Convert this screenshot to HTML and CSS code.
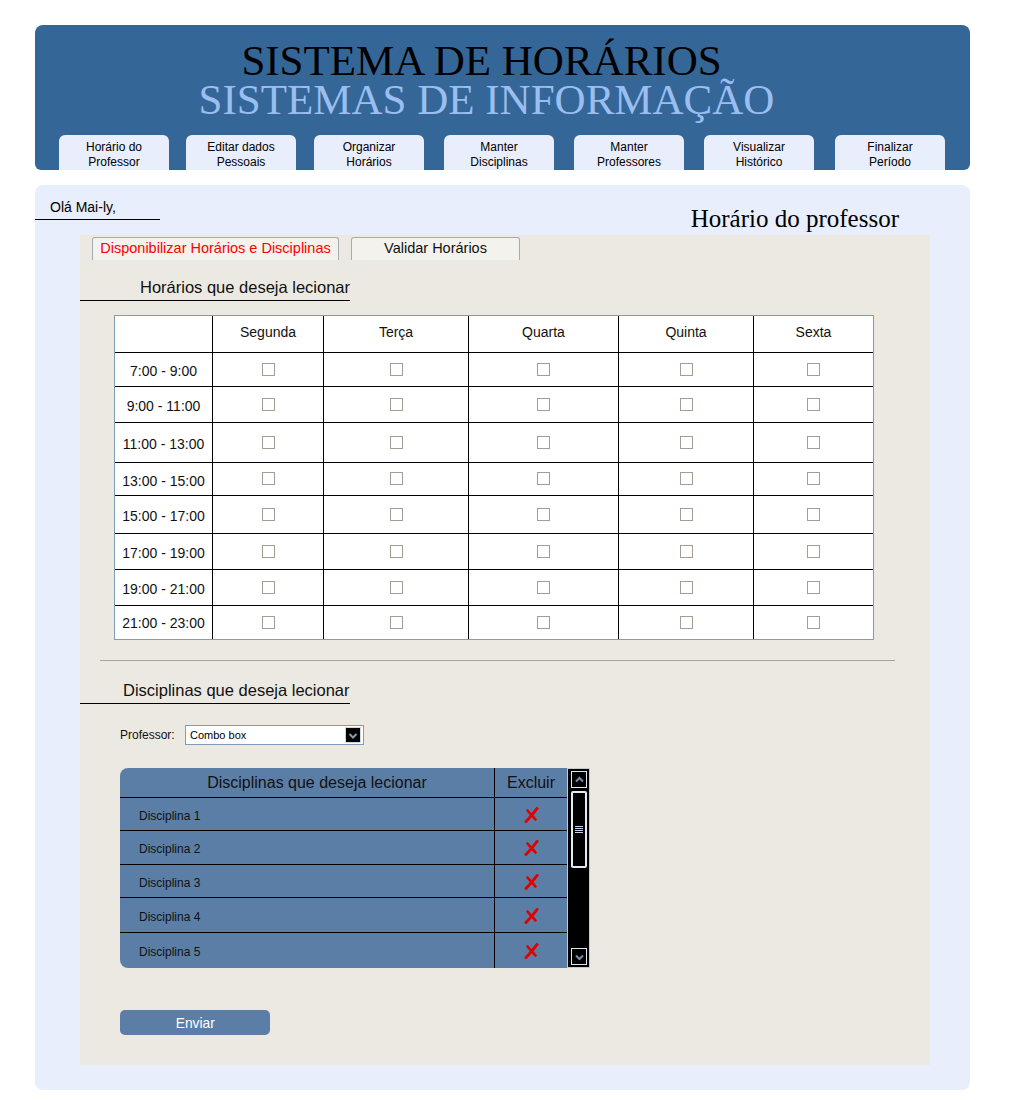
FILE: index.html
```html
<!DOCTYPE html>
<html lang="pt">
<head>
<meta charset="utf-8">
<title>Sistema de Horários</title>
<link rel="stylesheet" href="styles.css">
</head>
<body>
<div class="page">
  <header class="hdr">
    <div class="titles">
      <div class="t1">SISTEMA DE HORÁRIOS</div>
      <div class="t2">SISTEMAS DE INFORMAÇÃO</div>
    </div>
    <nav class="nav">
      <div class="nav-tab">Horário do<br>Professor</div>
      <div class="nav-tab">Editar dados<br>Pessoais</div>
      <div class="nav-tab">Organizar<br>Horários</div>
      <div class="nav-tab">Manter<br>Disciplinas</div>
      <div class="nav-tab">Manter<br>Professores</div>
      <div class="nav-tab">Visualizar<br>Histórico</div>
      <div class="nav-tab">Finalizar<br>Período</div>
    </nav>
  </header>

  <main class="main">
    <div class="top-row">
      <div class="greet">Olá Mai-ly,</div>
      <h1 class="page-title">Horário do professor</h1>
    </div>

    <section class="panel">
      <div class="tabs">
        <div class="tab active">Disponibilizar Horários e Disciplinas</div>
        <div class="tab">Validar Horários</div>
      </div>

      <h2 class="sec-h sec-h1">Horários que deseja lecionar</h2>

      <div class="grid">
        <div class="c h"></div><div class="c h">Segunda</div><div class="c h">Terça</div><div class="c h">Quarta</div><div class="c h">Quinta</div><div class="c h">Sexta</div>
        <div class="c t">7:00 - 9:00</div><div class="c"><span class="cb"></span></div><div class="c"><span class="cb"></span></div><div class="c"><span class="cb"></span></div><div class="c"><span class="cb"></span></div><div class="c"><span class="cb"></span></div>
        <div class="c t">9:00 - 11:00</div><div class="c"><span class="cb"></span></div><div class="c"><span class="cb"></span></div><div class="c"><span class="cb"></span></div><div class="c"><span class="cb"></span></div><div class="c"><span class="cb"></span></div>
        <div class="c t">11:00 - 13:00</div><div class="c"><span class="cb"></span></div><div class="c"><span class="cb"></span></div><div class="c"><span class="cb"></span></div><div class="c"><span class="cb"></span></div><div class="c"><span class="cb"></span></div>
        <div class="c t">13:00 - 15:00</div><div class="c"><span class="cb"></span></div><div class="c"><span class="cb"></span></div><div class="c"><span class="cb"></span></div><div class="c"><span class="cb"></span></div><div class="c"><span class="cb"></span></div>
        <div class="c t">15:00 - 17:00</div><div class="c"><span class="cb"></span></div><div class="c"><span class="cb"></span></div><div class="c"><span class="cb"></span></div><div class="c"><span class="cb"></span></div><div class="c"><span class="cb"></span></div>
        <div class="c t">17:00 - 19:00</div><div class="c"><span class="cb"></span></div><div class="c"><span class="cb"></span></div><div class="c"><span class="cb"></span></div><div class="c"><span class="cb"></span></div><div class="c"><span class="cb"></span></div>
        <div class="c t">19:00 - 21:00</div><div class="c"><span class="cb"></span></div><div class="c"><span class="cb"></span></div><div class="c"><span class="cb"></span></div><div class="c"><span class="cb"></span></div><div class="c"><span class="cb"></span></div>
        <div class="c t last">21:00 - 23:00</div><div class="c"><span class="cb"></span></div><div class="c"><span class="cb"></span></div><div class="c"><span class="cb"></span></div><div class="c"><span class="cb"></span></div><div class="c"><span class="cb"></span></div>
      </div>

      <div class="sep"></div>

      <h2 class="sec-h sec-h2">Disciplinas que deseja lecionar</h2>

      <div class="prof-row">
        <span class="prof-label">Professor:</span>
        <div class="combo">
          <span class="combo-text">Combo box</span>
          <span class="combo-btn">
            <svg width="14" height="13" viewBox="0 0 14 13"><polyline points="3.5,5 7,8.5 10.5,5" fill="none" stroke="#8a98b4" stroke-width="2"/></svg>
          </span>
        </div>
      </div>

      <div class="disc">
        <div class="disc-grid">
          <div class="d dh">Disciplinas que deseja lecionar</div><div class="d dh dx">Excluir</div>
          <div class="d dn">Disciplina 1</div><div class="d dx"><svg class="x" width="15" height="16" viewBox="0 0 15 16"><path d="M13 1.5 C10.5 5 6.5 10 2 14.5" fill="none" stroke="#e00000" stroke-width="3" stroke-linecap="round"/><path d="M3.5 3.5 C6 6.5 9 9.5 11.5 12.5" fill="none" stroke="#e00000" stroke-width="2.6" stroke-linecap="round"/></svg></div>
          <div class="d dn">Disciplina 2</div><div class="d dx"><svg class="x" width="15" height="16" viewBox="0 0 15 16"><path d="M13 1.5 C10.5 5 6.5 10 2 14.5" fill="none" stroke="#e00000" stroke-width="3" stroke-linecap="round"/><path d="M3.5 3.5 C6 6.5 9 9.5 11.5 12.5" fill="none" stroke="#e00000" stroke-width="2.6" stroke-linecap="round"/></svg></div>
          <div class="d dn">Disciplina 3</div><div class="d dx"><svg class="x" width="15" height="16" viewBox="0 0 15 16"><path d="M13 1.5 C10.5 5 6.5 10 2 14.5" fill="none" stroke="#e00000" stroke-width="3" stroke-linecap="round"/><path d="M3.5 3.5 C6 6.5 9 9.5 11.5 12.5" fill="none" stroke="#e00000" stroke-width="2.6" stroke-linecap="round"/></svg></div>
          <div class="d dn">Disciplina 4</div><div class="d dx"><svg class="x" width="15" height="16" viewBox="0 0 15 16"><path d="M13 1.5 C10.5 5 6.5 10 2 14.5" fill="none" stroke="#e00000" stroke-width="3" stroke-linecap="round"/><path d="M3.5 3.5 C6 6.5 9 9.5 11.5 12.5" fill="none" stroke="#e00000" stroke-width="2.6" stroke-linecap="round"/></svg></div>
          <div class="d dn">Disciplina 5</div><div class="d dx"><svg class="x" width="15" height="16" viewBox="0 0 15 16"><path d="M13 1.5 C10.5 5 6.5 10 2 14.5" fill="none" stroke="#e00000" stroke-width="3" stroke-linecap="round"/><path d="M3.5 3.5 C6 6.5 9 9.5 11.5 12.5" fill="none" stroke="#e00000" stroke-width="2.6" stroke-linecap="round"/></svg></div>
        </div>
        <div class="sbar">
          <div class="sb-btn">
            <svg width="13" height="14" viewBox="0 0 13 14"><polyline points="3,8.5 6.5,5 10,8.5" fill="none" stroke="#7d8ca8" stroke-width="2"/></svg>
          </div>
          <div class="sb-thumb">
            <span class="grip"></span><span class="grip"></span><span class="grip"></span><span class="grip"></span>
          </div>
          <div class="sb-track"></div>
          <div class="sb-btn">
            <svg width="13" height="14" viewBox="0 0 13 14"><polyline points="3,5.5 6.5,9 10,5.5" fill="none" stroke="#7d8ca8" stroke-width="2"/></svg>
          </div>
        </div>
      </div>

      <button class="send"><span class="send-text">Enviar</span></button>
    </section>
  </main>
</div>
</body>
</html>
```

FILE: styles.css
```css
* { box-sizing: border-box; }

body {
  margin: 0;
  background: #ffffff;
  font-family: "Liberation Sans", Arial, sans-serif;
  color: #000;
}

.page {
  width: 1024px;
  padding: 25px 0 10px 35px;
}

/* ---------- header ---------- */
.hdr {
  width: 935px;
  height: 145px;
  background: #346798;
  border-radius: 8px 8px 6px 6px;
  padding-top: 16px;
  overflow: hidden;
  display: flex;
  flex-direction: column;
}

.titles {
  font-family: "Liberation Serif", "Times New Roman", serif;
  font-size: 43px;
  line-height: 39px;
  text-align: center;
  padding-right: 36px;
}

.t1 { color: #000; padding-right: 6px; }
.t2 { color: #9bbef0; padding-left: 4px; }

.nav {
  display: flex;
  gap: 18px;
  padding: 0 25px 0 24px;
  margin-top: 16px;
}

.nav-tab {
  width: 110px;
  height: 35px;
  background: #e8eefb;
  border-radius: 6px 6px 0 0;
  font-size: 12px;
  line-height: 15px;
  text-align: center;
  padding-top: 5px;
  color: #000;
}

.nav-tab:nth-child(2) { margin-left: -1px; }
.nav-tab:nth-child(4),
.nav-tab:nth-child(5),
.nav-tab:nth-child(6) { margin-left: 2px; }
.nav-tab:nth-child(7) { margin-left: 3px; }

/* ---------- main ---------- */
.main {
  width: 935px;
  height: 905px;
  margin-top: 15px;
  background: #e8eefc;
  border-radius: 8px;
}

.top-row {
  display: flex;
  justify-content: space-between;
  height: 50px;
}

.greet {
  width: 125px;
  height: 35px;
  padding: 14px 0 0 15px;
  font-size: 14px;
  line-height: 17px;
  border-bottom: 1px solid #000;
}

.page-title {
  margin: 19px 71px 0 0;
  font-family: "Liberation Serif", "Times New Roman", serif;
  font-size: 25px;
  line-height: 30px;
  font-weight: normal;
}

.panel {
  margin: 0 40px 0 45px;
  height: 830px;
  background: #ece9e2;
  padding-top: 2px;
}

.tabs {
  display: flex;
  gap: 12px;
  padding-left: 12px;
}

.tab {
  width: 169px;
  height: 23px;
  background: #f4f2ec;
  border: 1px solid #a3abb3;
  border-bottom: none;
  border-radius: 3px 3px 0 0;
  font-size: 14.5px;
  line-height: 21px;
  text-align: center;
  color: #111;
  white-space: nowrap;
}

.tab.active {
  width: 247px;
  color: #ff0000;
}

.sec-h {
  width: 270px;
  margin: 16px 0 0 0;
  padding-top: 2px;
  font-size: 16.5px;
  line-height: 19px;
  font-weight: normal;
  color: #111;
  border-bottom: 1px solid #000;
  white-space: nowrap;
}

.sec-h1 { height: 25px; padding-left: 60px; }
.sec-h2 { height: 24px; padding-left: 43px; margin-top: 19px; padding-top: 1px; }

/* ---------- schedule grid ---------- */
.grid {
  margin: 14px 0 0 34px;
  width: 760px;
  border: 1px solid #7f9db9;
  background: #fff;
  display: grid;
  grid-template-columns: 98px 111px 145px 150px 135px 119px;
  grid-template-rows: 37px 34px 36px 40px 33px 38px 36px 36px 33px;
}

.c {
  display: flex;
  align-items: center;
  justify-content: center;
  border-right: 1px solid #000;
  border-bottom: 1px solid #000;
  font-size: 14px;
  color: #111;
}

.c:nth-child(6n) { border-right: none; }
.c:nth-last-child(-n+6) { border-bottom: none; }

.c.h { padding-bottom: 4px; }
.c.t { padding-top: 3px; }
.c.t.last { padding-top: 0; }

.cb {
  width: 13px;
  height: 13px;
  border: 1px solid #a39d94;
  background: #fff;
  margin-top: -1px;
}

.sep {
  margin: 20px 35px 0 20px;
  height: 1px;
  background: #a9a69d;
}

/* ---------- professor combo ---------- */
.prof-row {
  display: flex;
  align-items: center;
  margin: 21px 0 0 40px;
  height: 20px;
}

.prof-label {
  width: 65px;
  font-size: 12px;
  color: #111;
}

.combo {
  width: 179px;
  height: 20px;
  border: 1px solid #7f9db9;
  background: #fff;
  display: flex;
  align-items: center;
  justify-content: space-between;
  padding: 0 2px 0 4px;
}

.combo-text {
  font-size: 11px;
  color: #000;
}

.combo-btn {
  width: 16px;
  height: 16px;
  background: #000;
  border: 1px solid #cfd6e4;
  display: flex;
  align-items: center;
  justify-content: center;
}

/* ---------- disciplines table ---------- */
.disc {
  display: flex;
  margin: 23px 0 0 40px;
  width: 470px;
  height: 200px;
}

.disc-grid {
  width: 447px;
  background: #5b7ea6;
  border-radius: 8px 0 0 8px;
  display: grid;
  grid-template-columns: 375px 72px;
  grid-template-rows: 30px 33px 34px 33px 35px 35px;
}

.d {
  border-bottom: 1px solid #000;
  display: flex;
  align-items: center;
  font-size: 12px;
  color: #111;
}

.d:nth-child(odd) { border-right: 1px solid #000; }
.d:nth-last-child(-n+2) { border-bottom: none; }

.dh {
  justify-content: center;
  font-size: 16px;
  color: #111;
  padding-left: 20px;
}

.dh.dx { padding-left: 0; }

.dn { padding: 3px 0 0 19px; }

.dx { justify-content: center; }

.x { margin-top: 1px; }

.sbar {
  width: 23px;
  height: 200px;
  background: #000;
  border: 1px solid #c8c8c8;
  padding: 2px 2px 2px 3px;
  display: flex;
  flex-direction: column;
}

.sb-btn {
  width: 16px;
  height: 17px;
  border: 1px solid #dfe5f0;
  display: flex;
  align-items: center;
  justify-content: center;
}

.sb-thumb {
  width: 16px;
  height: 77px;
  margin-top: 3px;
  border: 2px solid #e4eaf4;
  border-radius: 2px;
  display: flex;
  flex-direction: column;
  align-items: center;
  justify-content: center;
  gap: 1px;
}

.grip {
  width: 8px;
  height: 1px;
  background: #c8d2e6;
}

.sb-track { flex: 1; }

/* ---------- send button ---------- */
.send {
  display: block;
  margin: 42px 0 0 40px;
  width: 150px;
  height: 25px;
  border: none;
  border-radius: 5px;
  background: #5b7ea6;
  color: #fff;
  font-family: "Liberation Sans", Arial, sans-serif;
  font-size: 15px;
  padding: 0;
}

.send-text {
  display: inline-block;
  transform: scaleX(0.92);
}
```
